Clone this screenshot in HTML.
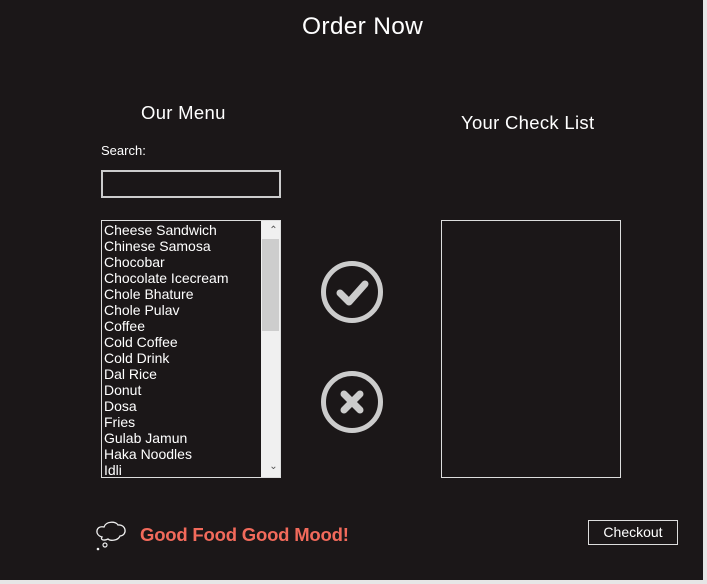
<!DOCTYPE html>
<html><head><style>
body{margin:0;width:707px;height:584px;background:#e6e6e6;overflow:hidden;position:relative;font-family:"Liberation Sans",sans-serif}
#m{position:absolute;left:0;top:0;width:703px;height:580px;background:#1b1718;color:#fff}
.a{position:absolute;white-space:nowrap}
.t{font-weight:300;letter-spacing:0.3px}
#list{position:absolute;left:101px;top:220px;width:178px;height:256px;border:1px solid #ddd;overflow:hidden}
#list div{font-size:14px;line-height:16px;padding-left:2px}
#sb{position:absolute;right:0;top:0;width:17px;height:256px;background:#f0f0f0}
</style></head><body>
<div id="m">
<div class="a t" style="left:302px;top:13px;font-size:24.5px">Order Now</div>
<div class="a t" style="left:141px;top:102px;font-size:18.5px">Our Menu</div>
<div class="a t" style="left:461px;top:112px;font-size:18.5px">Your Check List</div>
<div class="a" style="left:101px;top:143px;font-size:13px">Search:</div>
<div class="a" style="left:101px;top:170px;width:176px;height:24px;border:2px solid #ccc"></div>
<div id="list"><div style="padding-top:1px">Cheese Sandwich</div><div>Chinese Samosa</div><div>Chocobar</div><div>Chocolate Icecream</div><div>Chole Bhature</div><div>Chole Pulav</div><div>Coffee</div><div>Cold Coffee</div><div>Cold Drink</div><div>Dal Rice</div><div>Donut</div><div>Dosa</div><div>Fries</div><div>Gulab Jamun</div><div>Haka Noodles</div><div>Idli</div>
<div id="sb"><div style="position:absolute;left:1px;top:18px;width:15px;height:92px;background:#cdcdcd"></div>
<div style="position:absolute;top:2px;width:17px;text-align:center;color:#555;font-size:10px">&#8963;</div>
<div style="position:absolute;bottom:2px;width:17px;text-align:center;color:#555;font-size:10px">&#8964;</div></div></div>
<svg class="a" style="left:318px;top:258px" width="70" height="180">
<circle cx="34" cy="34" r="28.5" fill="none" stroke="#ccc" stroke-width="5"/>
<path d="M22 35 L31 44 L47 26" fill="none" stroke="#ccc" stroke-width="7" stroke-linecap="round" stroke-linejoin="round"/>
<circle cx="34" cy="144" r="28.5" fill="none" stroke="#ccc" stroke-width="5"/>
<path d="M26 136 L42 152 M42 136 L26 152" stroke="#ccc" stroke-width="7" stroke-linecap="round"/>
</svg>
<div class="a" style="left:441px;top:220px;width:178px;height:256px;border:1px solid #ddd"></div>
<svg class="a" style="left:94px;top:521px" width="34" height="34"><path d="M8 16 C0 14 2 4 10 6 C12 0 22 0 24 4 C32 3 34 14 26 15 C24 20 16 20 14 18 C10 20 6 19 8 16Z" fill="none" stroke="#eee" stroke-width="1.3"/><circle cx="11" cy="24" r="2" fill="none" stroke="#eee" stroke-width="1.2"/><circle cx="4" cy="28" r="1.3" fill="#eee"/></svg>
<div class="a" style="left:140px;top:524px;font-size:18.5px;color:#f26a5b;font-weight:bold;letter-spacing:-0.2px">Good Food Good Mood!</div>
<div class="a" style="left:588px;top:520px;width:88px;height:23px;border:1px solid #ddd;font-size:14px;text-align:center;line-height:22px">Checkout</div>
</div>
</body></html>
